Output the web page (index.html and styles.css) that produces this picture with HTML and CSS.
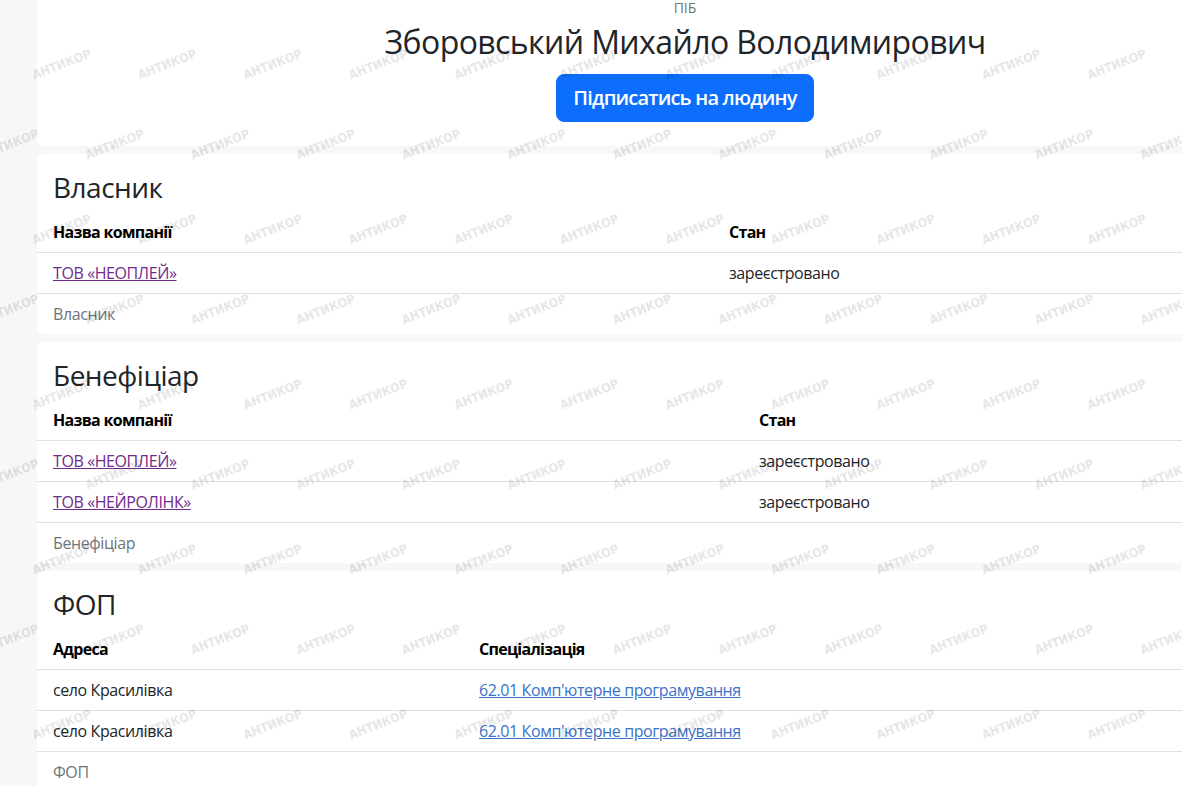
FILE: index.html
```html
<!DOCTYPE html>
<html lang="uk">
<head>
    <meta charset="UTF-8">
    <meta name="viewport" content="width=device-width, initial-scale=1.0">
    <title>Зборовський Михайло Володимирович</title>
    <link rel="stylesheet" href="styles.css">
</head>
<body>
    <div class="page">
        <section class="card card-person">
            <p class="person-label">ПІБ</p>
            <h2 class="person-name">Зборовський Михайло Володимирович</h2>
            <button class="btn-subscribe" type="button">Підписатись на людину</button>
        </section>

        <section class="card">
            <h3 class="card-title">Власник</h3>
            <table class="info-table owner-table">
                <thead>
                    <tr><th>Назва компанії</th><th>Стан</th></tr>
                </thead>
                <tbody>
                    <tr><td><a class="company-link" href="#">ТОВ «НЕОПЛЕЙ»</a></td><td>зареєстровано</td></tr>
                </tbody>
            </table>
            <div class="card-foot">Власник</div>
        </section>

        <section class="card">
            <h3 class="card-title">Бенефіціар</h3>
            <table class="info-table benef-table">
                <thead>
                    <tr><th>Назва компанії</th><th>Стан</th></tr>
                </thead>
                <tbody>
                    <tr><td><a class="company-link" href="#">ТОВ «НЕОПЛЕЙ»</a></td><td>зареєстровано</td></tr>
                    <tr><td><a class="company-link" href="#">ТОВ «НЕЙРОЛІНК»</a></td><td>зареєстровано</td></tr>
                </tbody>
            </table>
            <div class="card-foot">Бенефіціар</div>
        </section>

        <section class="card">
            <h3 class="card-title">ФОП</h3>
            <table class="info-table fop-table">
                <thead>
                    <tr><th>Адреса</th><th>Спеціалізація</th></tr>
                </thead>
                <tbody>
                    <tr><td>село Красилівка</td><td><a class="kved-link" href="#">62.01 Комп'ютерне програмування</a></td></tr>
                    <tr><td>село Красилівка</td><td><a class="kved-link" href="#">62.01 Комп'ютерне програмування</a></td></tr>
                </tbody>
            </table>
            <div class="card-foot">ФОП</div>
        </section>
    </div>

    <!-- watermark over the whole page -->
    <svg class="watermark" width="100%" height="100%" aria-hidden="true">
        <defs>
            <pattern id="wm" width="105.5" height="165" patternUnits="userSpaceOnUse">
                <text transform="translate(62 65) rotate(-21)">АНТИКОР</text>
                <text transform="translate(9.5 145) rotate(-21)">АНТИКОР</text>
                <text transform="translate(115 145) rotate(-21)">АНТИКОР</text>
            </pattern>
        </defs>
        <rect width="100%" height="100%" fill="url(#wm)"></rect>
    </svg>
</body>
</html>
```

FILE: styles.css
```css
* {
    box-sizing: border-box;
    margin: 0;
    padding: 0;
}

body {
    font-family: "Open Sans", "Noto Sans", sans-serif;
    font-size: 16px;
    line-height: 24px;
    letter-spacing: -0.4px;
    background-color: #f6f7f9;
    color: #212529;
    overflow: hidden;
}

.page {
    display: flex;
    flex-direction: column;
    gap: 8px;
    width: 1333px;
    padding-left: 37px;
}

.card {
    background-color: #fff;
    border-radius: 6px;
    padding-top: 16px;
}

/* person header */
.card-person {
    padding: 0 0 24px;
    text-align: center;
    border-radius: 0 0 6px 6px;
}

.person-label {
    font-size: 14px;
    line-height: 16px;
    letter-spacing: 0;
    color: #6c757d;
}

.person-name {
    font-size: 32px;
    line-height: 38px;
    font-weight: 500;
    letter-spacing: -0.6px;
    margin: 7px 0 13px;
}

.btn-subscribe {
    font-family: inherit;
    font-size: 20px;
    line-height: 30px;
    font-weight: 600;
    letter-spacing: -0.8px;
    color: #fff;
    background-color: #0d6efd;
    border: 1px solid #0d6efd;
    border-radius: 8px;
    padding: 8px 16px;
    cursor: pointer;
}

/* sections */
.card-title {
    font-size: 28px;
    line-height: 34px;
    font-weight: 500;
    letter-spacing: -0.5px;
    margin: 0 16px 8px;
}

.info-table {
    width: 100%;
    border-collapse: collapse;
    table-layout: fixed;
}

.info-table th,
.info-table td {
    text-align: left;
    padding: 8px 16px;
    border-bottom: 1px solid #dee2e6;
}

.info-table th {
    font-weight: 700;
    letter-spacing: -0.7px;
    color: #000;
}

.owner-table th:first-child {
    width: 676px;
}

.benef-table th:first-child {
    width: 706px;
}

.fop-table th:first-child {
    width: 426px;
}

.company-link {
    color: #6f2b8a;
}

.kved-link {
    color: #3b73c9;
}

.card-foot {
    padding: 8px 16px;
    color: #6c757d;
}

.watermark {
    position: fixed;
    top: 0;
    left: 0;
    pointer-events: none;
}

.watermark text {
    font-family: "Liberation Sans Narrow", "DejaVu Sans Condensed", sans-serif;
    font-size: 12.5px;
    font-weight: 700;
    letter-spacing: 0;
    text-anchor: middle;
    dominant-baseline: middle;
    fill: #000;
    fill-opacity: 0.1;
}
```
